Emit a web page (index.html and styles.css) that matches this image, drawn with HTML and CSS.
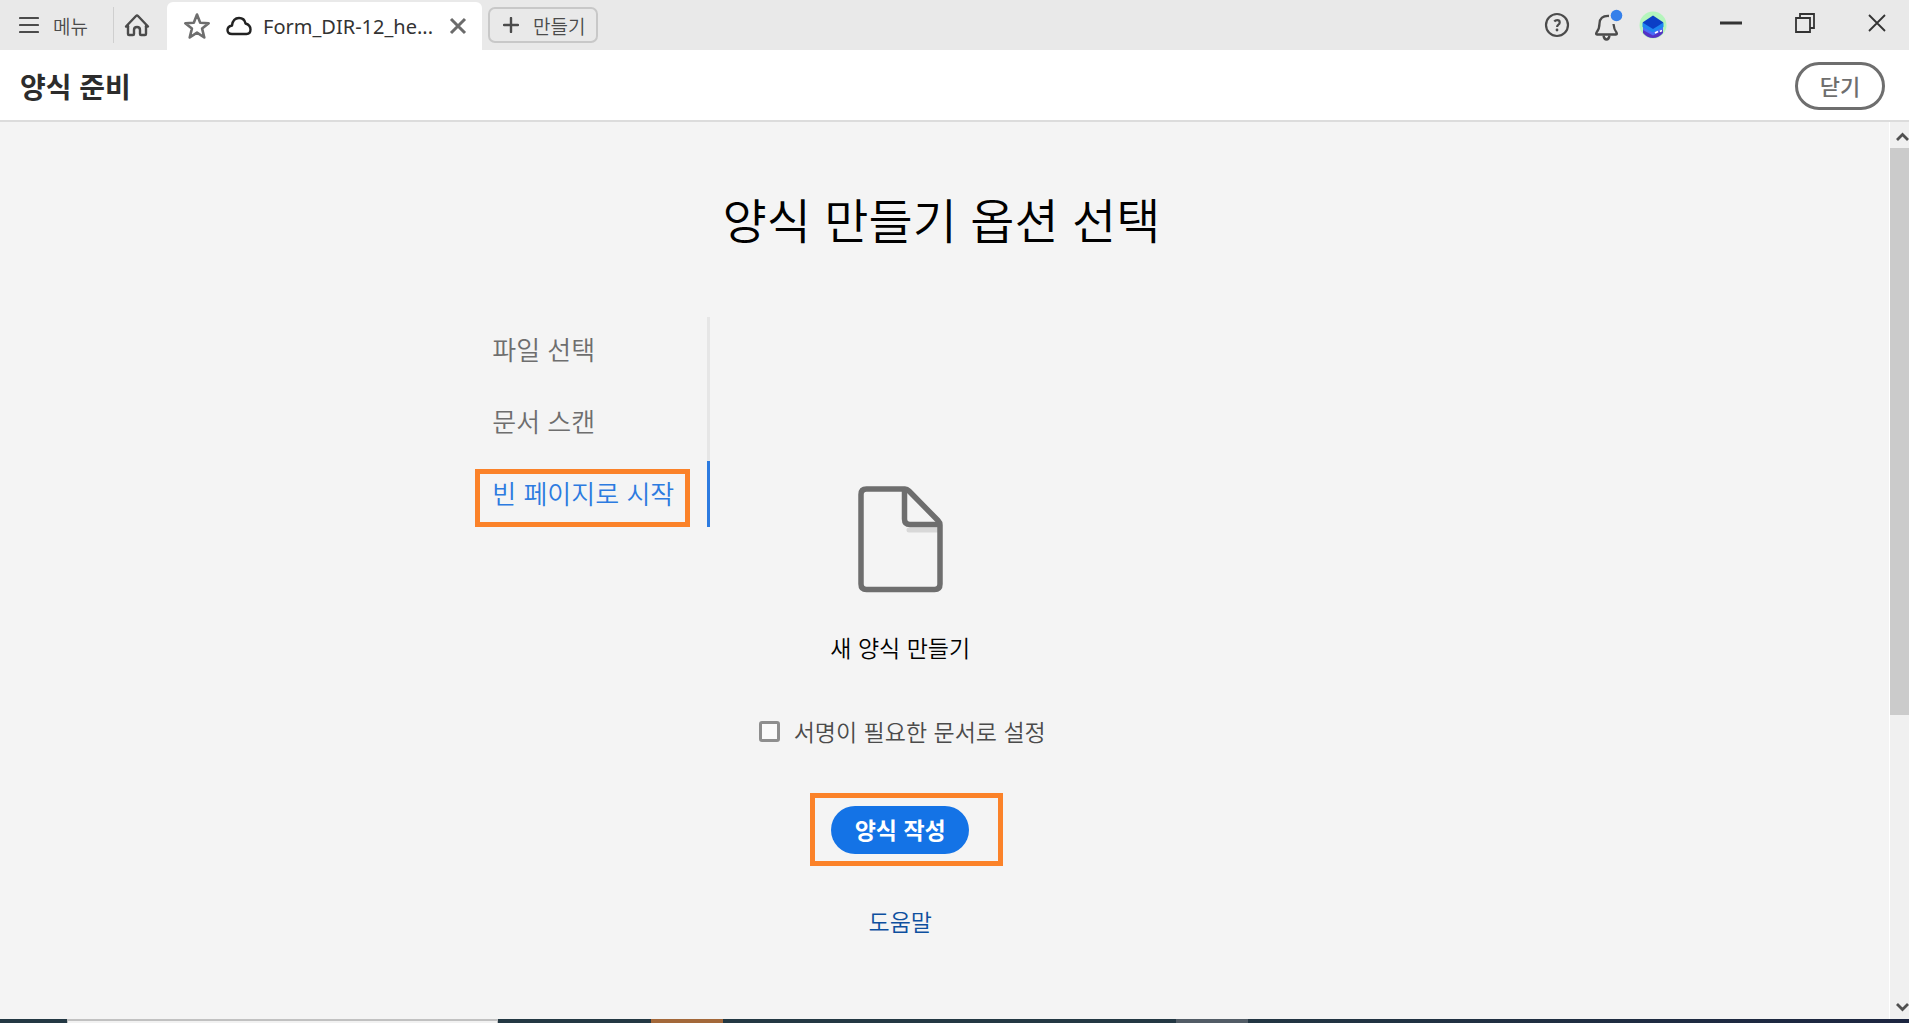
FILE: index.html
```html
<!DOCTYPE html>
<html lang="ko">
<head>
	<meta charset="UTF-8">
	<title>양식 준비</title>
	<link rel="stylesheet" href="styles.css">
</head>
<body>
	<div class="topbar">
		<button type="button" class="menu">
			<svg width="20" height="18" viewBox="0 0 20 18"><path d="M1 2h18M1 9h18M1 16h18" stroke="#4b4b4b" stroke-width="2.200" stroke-linecap="round"/></svg>
			메뉴
		</button>
		<button type="button" class="home" aria-label="홈">
			<svg width="26" height="24" viewBox="0 0 26 24" fill="none" stroke="#4b4b4b" stroke-width="2.400" stroke-linejoin="round" stroke-linecap="round"><path d="M4 13v8q0 1 1 1h4q1 0 1-1v-4q0-3 3-3t3 3v4q0 1 1 1h4q1 0 1-1v-8"/><path d="M4 13.500H2L12 3q1-1 2 0l10 10.500h-2"/></svg>
		</button>
		<div class="tab">
			<button type="button" aria-label="별표">
				<svg width="28" height="28" viewBox="0 0 28 28" fill="none" stroke="#6e6e6e" stroke-width="2.600" stroke-linejoin="round"><path d="M14 2.500l3.200 8.200 8.500.5-6.600 5.400 2.200 8.900-7.300-4.900-7.300 4.900 2.200-8.900-6.600-5.400 8.500-.5z"/></svg>
			</button>
			<svg class="cloud" width="26" height="20" viewBox="0 0 26 20" fill="none" stroke="#222" stroke-width="2.400" stroke-linejoin="round"><path d="M6 18Q1.500 18 1.500 14Q1.500 10.500 6 9.500Q7 2 13 2Q18.500 2 19.500 7.500Q24.500 9 24.500 13.500Q24.500 18 20.500 18z"/></svg>
			<span class="tab-name">Form_DIR-12_he...</span>
			<button type="button" class="tab-close" aria-label="탭 닫기">
				<svg width="18" height="18" viewBox="0 0 18 18"><path d="M2 2l14 14M16 2L2 16" stroke="#6b6b6b" stroke-width="3"/></svg>
			</button>
		</div>
		<button type="button" class="create">
			<svg width="16" height="16" viewBox="0 0 16 16"><path d="M8 1v14M1 8h14" stroke="#4b4b4b" stroke-width="2.400" stroke-linecap="round"/></svg>
			만들기
		</button>
		<div class="tools">
			<button type="button" aria-label="도움말">
				<svg width="26" height="26" viewBox="0 0 26 26" fill="none" stroke="#4b4b4b" stroke-width="2.200"><circle cx="13" cy="13" r="11"/><path d="M10.300 9.500q1-1.300 2.900-1.300 2.500 0 2.500 2.200 0 1.300-1.300 2.200-1.300.9-1.300 2.400"/><circle cx="13" cy="18" r="1.400" fill="#4b4b4b" stroke="none"/></svg>
			</button>
			<button type="button" aria-label="알림">
				<svg width="30" height="32" viewBox="0 0 30 32" fill="none" stroke="#4b4b4b" stroke-width="2.300" stroke-linejoin="round"><path d="M15 7Q6 6.500 5.500 14.500Q5.500 20 2.500 23.500Q1.500 25.500 3 25.500H22Q23.500 25.500 22.500 23.500Q20 20.500 19.500 15"/><path d="M9.500 26.500q.5 4 3 4t3-4"/><circle cx="22.500" cy="6.500" r="5.800" fill="#3580ea" stroke="none"/></svg>
			</button>
			<button type="button" class="profile" aria-label="프로필">
				<svg width="28" height="28" viewBox="0 0 28 28"><circle cx="14" cy="14" r="13.500" fill="#b5f5bd"/><path d="M4 18.500h20v3.500q-4 5-10 5t-10-5z" fill="#5333c4"/><path d="M4 15h20v4l-10 5.500-10-5.500z" fill="#4a6cf7"/><path d="M3.500 12h21v4L14 21.500 3.500 16z" fill="#1d86f0"/><path d="M3.500 11.500L14 4.500l10.500 7L14 18z" fill="#0b3fc6"/><path d="M16 22l3-1.500M21 20.500l2-1" stroke="#fff" stroke-width="1.600"/></svg>
			</button>
		</div>
		<div class="window">
			<button type="button" aria-label="최소화"><svg width="22" height="20" viewBox="0 0 22 20"><path d="M0 10h22" stroke="#333" stroke-width="3"/></svg></button>
			<button type="button" aria-label="이전 크기로"><svg width="20" height="20" viewBox="0 0 20 20" fill="none" stroke="#333" stroke-width="1.800"><path d="M1 5h14v14H1z"/><path d="M5 5V1h14v14h-4"/></svg></button>
			<button type="button" aria-label="창 닫기"><svg width="18" height="18" viewBox="0 0 18 18"><path d="M1 1l16 16M17 1L1 17" stroke="#333" stroke-width="1.800"/></svg></button>
		</div>
	</div>
	<div class="header">
		<h1>양식 준비</h1>
		<button type="button" class="close">닫기</button>
	</div>
	<div class="body">
		<div class="content">
			<h2>양식 만들기 옵션 선택</h2>
			<div class="options">
				<div class="list">
					<button type="button">파일 선택</button>
					<button type="button">문서 스캔</button>
					<button type="button" class="active">빈 페이지로 시작</button>
				</div>
				<div class="panel">
					<svg width="86" height="108" viewBox="0 0 86 108" fill="none" stroke="#6e6e6e" stroke-width="5.500" stroke-linejoin="round"><path d="M52 45h28" stroke="#d8d8d8" stroke-width="5" stroke-linecap="round"/><path d="M48 4H9.500Q4 4 4 9.500V99Q4 104.500 9.500 104.500H77.500Q83 104.500 83 99V40Q83 37.500 81 35.500L52 6Q50 4 48 4z"/><path d="M47.500 5V34Q47.500 39.500 53 39.500H83"/></svg>
					<p>새 양식 만들기</p>
					<label class="sign" for="sign"><input type="checkbox" id="sign">서명이 필요한 문서로 설정</label>
					<div class="submit"><button type="button">양식 작성</button></div>
					<a href="#">도움말</a>
				</div>
			</div>
		</div>
		<div class="scroll">
			<svg width="19" height="26" viewBox="0 0 19 26"><path d="M7 18l5.500-5.500L18 18" fill="none" stroke="#505050" stroke-width="2.800"/></svg>
			<div class="track"><div class="thumb"></div></div>
			<svg width="19" height="24" viewBox="0 0 19 24"><path d="M7 9l5.500 5.500L18 9" fill="none" stroke="#505050" stroke-width="2.800"/></svg>
		</div>
	</div>
	<div class="taskbar"><i class="search"></i><i class="brown"></i><i class="gray"></i></div>
</body>
</html>
```

FILE: styles.css
```css
*{box-sizing: border-box;}
body{display: flex;flex-direction: column;height: 100vh;margin: 0;overflow: hidden;background-color: #f4f4f4;font-family: "Noto Sans CJK KR", sans-serif;font-weight: 350;}
button{display: flex;align-items: center;padding: 0;border: 0;background: none;font: inherit;color: inherit;}
svg{flex: none;display: block;}

.topbar{display: flex;align-items: center;flex: none;height: 50px;background-color: #e9e9e9;color: #4b4b4b;}
.menu{gap: 14px;width: 114px;height: 36px;padding-left: 19px;border-right: 1px solid #cfcfcf;font-size: 19px;}
.home{padding: 0 17px 0 10px;}
.tab{display: flex;align-items: center;align-self: flex-end;width: 315px;height: 48px;padding: 0 15px 0 16px;border-radius: 6px 6px 0 0;background-color: #fff;}
.cloud{margin: 0 11px 0 15px;}
.tab-name{font-family: "Noto Sans", sans-serif;font-size: 20px;font-weight: 400;color: #333;}
.tab-close{margin-left: auto;}
.create{gap: 14px;height: 36px;margin-left: 6px;padding: 0 11px 0 13px;border: 2px solid #c8c8c8;border-radius: 7px;font-size: 19px;}
.tools{display: flex;align-items: center;gap: 24px;margin-left: auto;}
.profile{margin-left: -9px;}
.window{display: flex;align-items: center;gap: 53px;margin-left: 53px;padding: 0 23px 4px 0;}

.header{display: flex;align-items: center;justify-content: space-between;flex: none;height: 72px;padding: 2px 24px 0 20px;border-bottom: 2px solid #dcdcdc;background-color: #fff;}
.header h1{margin: 0;font-size: 28px;font-weight: 700;color: #2c2c2c;}
.close{justify-content: center;width: 90px;height: 48px;border: 3px solid #6e6e6e;border-radius: 24px;padding-bottom: 2px;font-size: 22px;font-weight: 500;color: #6e6e6e;}

.body{display: flex;flex: 1;min-height: 0;}
.content{flex: 1;overflow: hidden;padding-top: 60px;}
.content h2{margin: 0 0 63px;padding-right: 6px;font-size: 48px;line-height: 72px;font-weight: 350;text-align: center;color: #000;}
.options{display: flex;padding-left: 25%;}
.list{display: flex;flex-direction: column;align-self: flex-start;gap: 6px;width: 238px;background: linear-gradient(#e6e6e6, #e6e6e6) right / 3px 100% no-repeat;font-size: 26px;color: #6e6e6e;}
.list button{height: 66px;padding: 0 0 4px 20px;}
.list .active{position: relative;border-right: 3px solid #2c7be0;color: #2c7be0;}
.list .active::before{content: "";position: absolute;left: 3px;right: 17px;top: 8px;bottom: 0;border: 5px solid #fb8229;}
.panel{display: flex;flex-direction: column;align-items: center;width: 380px;padding-top: 168px;font-size: 23px;line-height: 34px;}
.panel p{margin: 37px 0 50px;color: #000;}
.sign{display: flex;align-items: center;gap: 14px;padding-left: 4px;color: #4b4b4b;}
.sign input{appearance: none;width: 21px;height: 21px;margin: 0;border: 3px solid #8e8e8e;border-radius: 3px;background-color: #fafafa;}
.submit{position: relative;margin: 58px 0 50px;}
.submit::before{content: "";position: absolute;left: -21px;right: -34px;top: -13px;bottom: -12px;border: 5px solid #fb8229;}
.submit button{position: relative;justify-content: center;width: 138px;height: 48px;padding-bottom: 2px;border-radius: 24px;background-color: #1473e6;font-weight: 700;color: #fff;}
.panel a{text-decoration: none;color: #0d4f9e;}

.scroll{display: flex;flex-direction: column;width: 20px;border-left: 1px solid #fff;background-color: #f0f0f0;}
.track{flex: 1;}
.thumb{height: 67%;background-color: #cbcbcb;}

.taskbar{display: flex;flex: none;height: 4px;background: linear-gradient(90deg, #233843 60%, #1c2540);}
.search{width: 22.6%;margin-left: 3.5%;border: 1px solid #c1c1c1;border-top-width: 2px;border-bottom: 0;background-color: #f2f2f2;}
.brown{width: 3.8%;margin-left: 8%;background-color: #a3683a;}
.gray{width: 3.8%;margin-left: 23.7%;background-color: #525c66;}
```
